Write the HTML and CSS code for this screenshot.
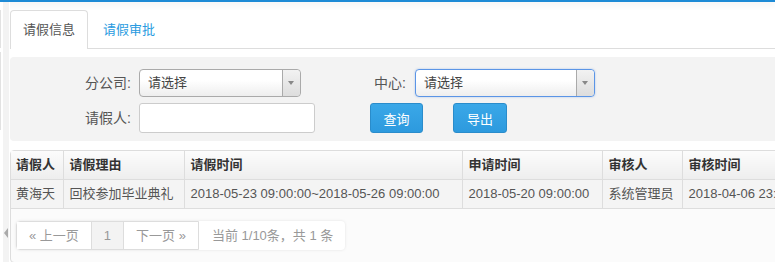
FILE: index.html
```html
<!DOCTYPE html>
<html lang="zh-CN">
<head>
<meta charset="utf-8"/>
<title>请假信息</title>
<link rel="stylesheet" href="styles.css">
</head>
<body>
<div class="topbar"></div>
<div class="layout">
	<div class="sidebar">
		<div class="side-edge one"></div>
		<div class="side-edge two"></div>
		<span class="side-toggle"></span>
	</div>
	<div class="main">
		<ul class="tabs">
			<li class="tab active">请假信息</li>
			<li class="tab">请假审批</li>
		</ul>
		<form class="search" autocomplete="off">
			<div class="row">
				<label class="lbl">分公司:</label>
				<div class="select w1"><span>请选择</span><i></i></div>
				<label class="lbl lbl2">中心:</label>
				<div class="select w2 focus"><span>请选择</span><i></i></div>
			</div>
			<div class="row">
				<label class="lbl">请假人:</label>
				<input class="text" type="text">
				<button type="button" class="btn query">查询</button>
				<button type="button" class="btn export">导出</button>
			</div>
		</form>
		<div class="grid">
			<table>
				<colgroup>
					<col style="width:52px"><col style="width:121px"><col style="width:278px"><col style="width:140px"><col style="width:80px"><col style="width:160px">
				</colgroup>
				<thead>
					<tr><th>请假人</th><th>请假理由</th><th>请假时间</th><th>申请时间</th><th>审核人</th><th>审核时间</th></tr>
				</thead>
				<tbody>
					<tr><td>黄海天</td><td>回校参加毕业典礼</td><td>2018-05-23 09:00:00~2018-05-26 09:00:00</td><td>2018-05-20 09:00:00</td><td>系统管理员</td><td>2018-04-06 23:00:00</td></tr>
				</tbody>
			</table>
			<div class="pager">
				<ul class="pages">
					<li>« 上一页</li>
					<li class="current">1</li>
					<li>下一页 »</li>
				</ul>
				<span class="info">当前 1/10条，共 1 条</span>
			</div>
		</div>
	</div>
</div>
</body>
</html>
```
FILE: styles.css
```css
html {
	overflow:hidden;
}
body {
	margin:0;
	background:#fff;
	color:#555;
	font:400 13px/1.2 "Liberation Sans", "Noto Sans CJK SC", sans-serif;
}
.topbar {
	height:2px;
	background:#1e8bd6;
	box-shadow:0 2px 6px rgba(0,0,0,.12);
}
.layout {
	display:flex;
	height:260px;
}
.sidebar {
	width:10px;
	flex:none;
	position:relative;
	background:linear-gradient(to right, #fff 0, #fff 3px, #f3f3f3 3px, #f3f3f3 9px, #fff 9px);
}
.side-edge {
	position:absolute;
	left:0;
	width:1px;
	background:#e2e2e2;
}
.side-edge.one {
	top:8px;
	height:38px;
}
.side-edge.two {
	top:50px;
	height:78px;
}
.side-toggle {
	position:absolute;
	left:4px;
	top:226px;
	border:5px solid transparent;
	border-right:4px solid #aaa;
	border-left:0;
}
.main {
	flex:1;
	min-width:0;
	padding-top:8px;
}
.tabs {
	display:flex;
	margin:0;
	padding:0;
	list-style:none;
	border-bottom:1px solid #ddd;
}
.tab {
	height:37px;
	line-height:37px;
	padding:0 12px;
	margin-bottom:-1px;
	border:1px solid transparent;
	border-bottom:0;
	color:#2a9be0;
}
.tab + .tab {
	margin-left:2px;
}
.tab.active {
	color:#555;
	background:#fff;
	border-color:#ddd;
	border-radius:4px 4px 0 0;
	height:38px;
}
.search {
	margin:8px 0 0;
	padding:12px 0 8px;
	width:800px;
	background:#f3f3f3;
	border-radius:4px;
}
.row {
	display:flex;
	align-items:center;
}
.row + .row {
	margin-top:6px;
}
.lbl {
	width:121px;
	text-align:right;
	margin-right:8px;
	color:#555;
	font-size:14px;
}
.lbl2 {
	width:105px;
	margin-right:9px;
}
.select {
	display:flex;
	height:26px;
	border:1px solid #aaa;
	border-radius:4px;
	background:linear-gradient(#fff 40%, #eee);
	box-sizing:content-box;
	color:#444;
}
.select span {
	flex:1;
	line-height:26px;
	padding-left:8px;
}
.select i {
	width:17px;
	border-left:1px solid #aaa;
	border-radius:0 4px 4px 0;
	background:linear-gradient(#f2f2f2, #ddd);
	position:relative;
}
.select i:after {
	content:'';
	position:absolute;
	left:5px;
	top:11px;
	border:3.5px solid transparent;
	border-top:4px solid #888;
	border-bottom:0;
}
.w1 {
	width:160px;
}
.w2 {
	width:178px;
}
.select.focus {
	border-color:#5b95e6;
	box-shadow:0 0 2px rgba(91,149,230,.5);
}
.text {
	padding:0;
	border:1px solid #ccc;
	border-radius:3px;
	background:#fff;
	box-sizing:border-box;
	width:176px;
	height:30px;
}
.btn {
	height:30px;
	width:53px;
	padding:0;
	border:1px solid #2a8ccb;
	border-radius:3px;
	background:linear-gradient(#3aa8e8, #2d9ade);
	color:#fff;
	font:400 13px "Liberation Sans", "Noto Sans CJK SC", sans-serif;
}
.query {
	margin-left:55px;
}
.export {
	margin-left:30px;
	width:54px;
}
.grid {
	margin-top:9px;
	width:840px;
	height:111px;
	border:1px solid #ddd;
	border-radius:4px;
	background:#fbfbfb;
}
table {
	border-collapse:collapse;
	table-layout:fixed;
	width:831px;
}
th,
td {
	text-align:left;
	padding:0 5px;
	white-space:nowrap;
	overflow:hidden;
	border-right:1px solid #ddd;
}
th {
	height:28px;
	color:#333;
	font-weight:700;
	background:linear-gradient(#fcfcfc, #eee);
	border-bottom:1px solid #ddd;
}
td {
	height:28px;
	color:#555;
	background:#f4f4f4;
	border-bottom:1px solid #ddd;
}
th + th,
td + td {
	padding-left:6px;
}
.pager {
	display:inline-flex;
	align-items:center;
	margin:12px 0 0 5px;
	border-radius:4px;
	background:#fff;
	box-shadow:0 0 3px rgba(0,0,0,.1);
	padding-right:12px;
}
.pages {
	display:flex;
	margin:0;
	padding:0;
	list-style:none;
	border:1px solid #ddd;
	border-radius:4px 0 0 4px;
}
.pages li {
	height:27px;
	line-height:27px;
	padding:0 12px;
	color:#999;
	background:#fff;
}
.pages li + li {
	border-left:1px solid #ddd;
}
.pages li.current {
	background:#f3f3f3;
}
.info {
	margin-left:13px;
	color:#999;
}
```
